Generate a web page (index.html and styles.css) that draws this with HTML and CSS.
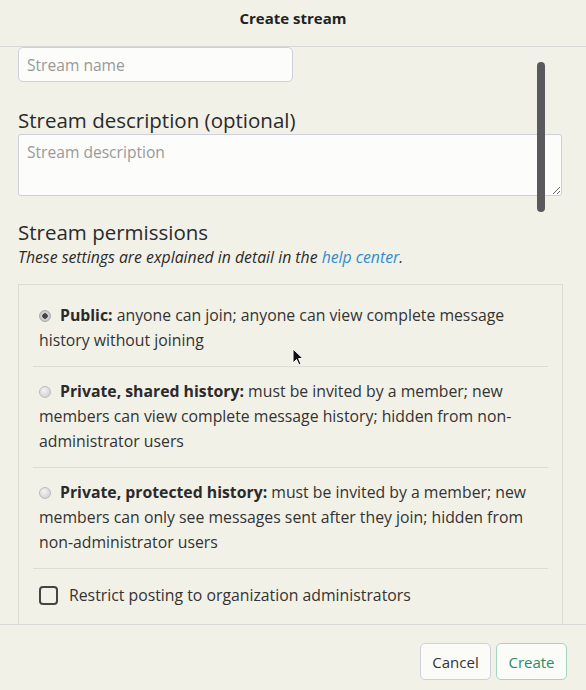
FILE: index.html
```html
<!DOCTYPE html>
<html>
<head>
<meta charset="utf-8">
<link rel="stylesheet" href="styles.css">
</head>
<body>
<div class="modal">
  <header class="modal-header">Create stream</header>
  <div class="modal-body">
    <div class="content">
      <input class="name-input" type="text" placeholder="Stream name">
      <h3 class="section-title desc-title">Stream description (optional)</h3>
      <textarea class="desc-input" placeholder="Stream description"></textarea>
      <h3 class="section-title perm-title">Stream permissions</h3>
      <p class="hint">These settings are explained in detail in the <a href="#">help center</a>.</p>
      <div class="perm-box">
        <label class="perm-row">
          <span class="radio checked"></span><b>Public:</b> anyone can join; anyone can view complete message history without joining
        </label>
        <label class="perm-row">
          <span class="radio"></span><b>Private, shared history:</b> must be invited by a member; new members can view complete message history; hidden from non-administrator users
        </label>
        <label class="perm-row">
          <span class="radio"></span><b>Private, protected history:</b> must be invited by a member; new members can only see messages sent after they join; hidden from non-administrator users
        </label>
        <label class="perm-row check-row">
          <span class="checkbox"></span><span>Restrict posting to organization administrators</span>
        </label>
      </div>
    </div>
    <div class="scroll-thumb"></div>
  </div>
  <footer class="modal-footer">
    <button class="btn">Cancel</button>
    <button class="btn btn-create">Create</button>
  </footer>
  <svg class="cursor" width="12" height="19" viewBox="0 0 12 19"><path d="M1 1 L1 15 L4.5 11.5 L7 17 L9 16 L6.6 10.6 L11 10.6 Z" fill="#111" stroke="#fff" stroke-width="1"/></svg>
</div>
</body>
</html>
```
FILE: styles.css
```css
html, body {
  margin: 0;
  padding: 0;
}
body {
  font-family: "Open Sans", "Noto Sans", sans-serif;
  color: #333;
  background: #f2f1e8;
}
.modal {
  position: relative;
  width: 586px;
  height: 690px;
  display: flex;
  flex-direction: column;
  background: #f2f1e8;
}
.modal-header {
  height: 47px;
  box-sizing: border-box;
  border-bottom: 1px solid #d8d8d8;
  display: flex;
  align-items: center;
  justify-content: center;
  font-weight: 700;
  font-size: 15px;
  color: #222;
  padding-bottom: 10px;
}
.modal-body {
  position: relative;
  flex: 1;
  overflow: hidden;
}
.content {
  padding: 0 23px 0 18px;
}
.name-input {
  display: block;
  box-sizing: border-box;
  width: 275px;
  height: 35px;
  margin: 0;
  padding: 0 8px;
  border: 1px solid #cfcfdc;
  border-radius: 5px;
  background: #fcfcfa;
  font-family: inherit;
  font-size: 15.6px;
  color: #333;
}
.name-input::placeholder, .desc-input::placeholder {
  color: #999;
}
.section-title {
  margin: 0;
  font-weight: 400;
  font-size: 20.5px;
  line-height: 26px;
  color: #2a2a2a;
}
.desc-title {
  margin-top: 25px;
  margin-bottom: 1px;
}
.desc-input {
  display: block;
  box-sizing: border-box;
  width: 544px;
  height: 62px;
  margin: 0;
  padding: 6px 8px;
  border: 1px solid #cfcfdc;
  border-radius: 3px;
  background: #fcfcfa;
  font-family: inherit;
  font-size: 15.6px;
  resize: vertical;
}
.perm-title {
  margin-top: 23px;
  margin-bottom: 1px;
}
.hint {
  margin: 0;
  font-style: italic;
  font-size: 15.8px;
  line-height: 22px;
  color: #2a2a2a;
}
.hint a {
  color: #2f8bcf;
  text-decoration: none;
}
.perm-box {
  margin-top: 16px;
  width: 545px;
  box-sizing: border-box;
  border: 1px solid #dcdcd4;
  border-bottom: 0;
  padding: 6px 14px;
}
.perm-row {
  display: block;
  padding: 12px 6px 13px;
  border-bottom: 1px solid #dcdcd4;
  font-size: 15.8px;
  line-height: 25px;
  color: #333;
}
.perm-row b {
  font-weight: 700;
  color: #2a2a2a;
}
.perm-row:last-child {
  border-bottom: 0;
}
.radio {
  display: inline-block;
  width: 12px;
  height: 12px;
  margin-right: 9px;
  border-radius: 50%;
  box-sizing: border-box;
  border: 1px solid #bbb;
  background: radial-gradient(circle at 40% 35%, #f4f4f4, #c9c9c9);
  vertical-align: -1px;
}
.radio.checked {
  background: radial-gradient(circle, #444 0 2.5px, #d6d6d6 3px, #bdbdbd 6px);
  border-color: #aaa;
}
.check-row {
  display: flex;
  align-items: center;
  padding-top: 14px;
}
.checkbox {
  flex: none;
  width: 19px;
  height: 19px;
  box-sizing: border-box;
  border: 2px solid #444;
  border-radius: 4px;
  margin-right: 11px;
}
.scroll-thumb {
  position: absolute;
  right: 41px;
  top: 15px;
  width: 8px;
  height: 150px;
  border-radius: 4px;
  background: #5a5a5e;
}
.modal-footer {
  height: 66px;
  box-sizing: border-box;
  border-top: 1px solid #d8d8d8;
  display: flex;
  justify-content: flex-end;
  align-items: flex-start;
  gap: 5px;
  padding: 18px 19px 0 0;
}
.btn {
  height: 37px;
  width: 71px;
  box-sizing: border-box;
  border: 1px solid #cfcfdc;
  border-radius: 5px;
  background: #fbfbf8;
  font-family: inherit;
  font-size: 15px;
  color: #333;
  padding: 0;
}
.btn-create {
  color: #2e8a6b;
  border-color: #a9d3c1;
}
.cursor {
  position: absolute;
  left: 292px;
  top: 348px;
}
```
